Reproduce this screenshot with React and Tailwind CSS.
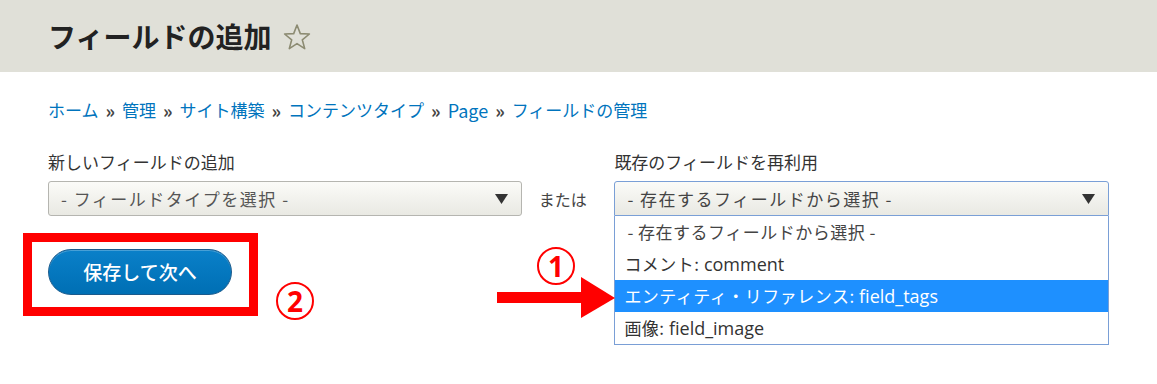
import { useState } from "react";

const jp = { fontFamily: '"Noto Sans CJK JP", "Noto Sans", sans-serif' };
const crumbs = ["ホーム", "管理", "サイト構築", "コンテンツタイプ", "Page", "フィールドの管理"];
const options = [
  { label: "- 存在するフィールドから選択 -" },
  { label: "コメント:", name: "comment" },
  { label: "エンティティ・リファレンス:", name: "field_tags" },
  { label: "画像:", name: "field_image" },
];

function Caret() {
  return (
    <svg width="13" height="10" viewBox="0 0 13 10" className="shrink-0">
      <polygon points="0,0 13,0 6.5,10" fill="#333" />
    </svg>
  );
}

function Circled({ n, className }) {
  return (
    <div
      className={`absolute w-[38px] h-[38px] rounded-full border-2 border-[#ff0000] flex items-center justify-center text-[#ff0000] text-[28px] font-bold leading-none ${className}`}
      style={{ fontFamily: '"Noto Sans", sans-serif' }}
    >
      {n}
    </div>
  );
}

export default function App() {
  const [picked] = useState(2);

  return (
    <div className="w-[1157px] h-[384px] bg-white overflow-hidden" style={jp}>
      <div className="h-[72px] bg-[#e0e0d8] flex items-center px-12 gap-3">
        <h1 className="text-[28px] font-bold text-[#222] leading-none">フィールドの追加</h1>
        <svg width="28" height="28" viewBox="0 0 28 28" className="mt-[2px]">
          <polygon
            points="14,2 17.3,10.6 26.4,11 19.3,16.8 21.7,25.6 14,20.6 6.3,25.6 8.7,16.8 1.6,11 10.7,10.6"
            fill="none"
            stroke="#8c8b72"
            strokeWidth="1.6"
            strokeLinejoin="round"
          />
        </svg>
      </div>

      <div className="relative px-12">
        <nav className="pt-[26px] text-[17px] leading-6 flex items-center gap-[7px]">
          {crumbs.map((c, i) => (
            <span key={c} className="flex items-center gap-[7px]">
              <a className={`text-[#0074bd] ${c === "Page" ? "text-[18px]" : ""}`}>{c}</a>
              {i < crumbs.length - 1 && <span className="text-[#444] text-[18px] font-bold">»</span>}
            </span>
          ))}
        </nav>

        <div className="mt-[28px] flex items-start">
          <div className="w-[476px]">
            <div className="text-[17px] leading-6 text-[#333]">新しいフィールドの追加</div>
            <div className="mt-[7px] h-[35px] rounded-[3px] border border-[#b5b5b0] bg-gradient-to-b from-[#fbfbf8] to-[#e9e9e3] flex items-center justify-between pl-[12px] pr-[13px] text-[17px] tracking-[1.5px] text-[#555]">
              <span>- フィールドタイプを選択 -</span>
              <Caret />
            </div>
          </div>

          <div className="ml-[17px] w-[76px] pt-[31px] h-[66px] flex items-center text-[16px] text-[#444]">または</div>

          <div className="w-[497px]">
            <div className="text-[17px] leading-6 text-[#333]">既存のフィールドを再利用</div>
            <div className="relative mt-[7px]">
              <div className="h-[35px] rounded-t-[3px] border border-[#7a9fd6] bg-gradient-to-b from-[#fbfbf8] to-[#e9e9e3] flex items-center justify-between pl-[12px] pr-[13px] text-[17px] tracking-[1.5px] text-[#444]">
                <span>- 存在するフィールドから選択 -</span>
                <Caret />
              </div>
              <ul className="absolute left-0 right-0 top-full border border-t-0 border-[#7a9fd6] bg-white text-[18px]">
                {options.map((o, i) => (
                  <li
                    key={o.label}
                    className={`h-[32px] flex items-center whitespace-pre ${i === picked ? "bg-[#1e90ff] text-white" : "text-[#333]"} ${i === 0 ? "pl-[12px] text-[#444]" : "pl-[9px]"}`}
                  >
                    <span className="text-[17px] tracking-[0.5px]">
                      {o.label}
                      {o.name && " "}
                    </span>
                    {o.name && <span style={{ fontFamily: '"Open Sans", sans-serif' }}>{o.name}</span>}
                  </li>
                ))}
              </ul>
            </div>
          </div>
        </div>

        <button className="mt-[33px] w-[184px] h-[46px] rounded-full border border-[#1a5a8c] bg-gradient-to-b from-[#0a80c9] to-[#006fb4] text-white text-[19px] font-medium shadow-[inset_0_1px_0_rgba(255,255,255,0.25)]">
          保存して次へ
        </button>

        <div className="absolute left-[23px] top-[161px] w-[235px] h-[83px] border-[9px] border-[#ff0000]" />
        <Circled n="2" className="left-[276px] top-[210px]" />
        <Circled n="1" className="left-[537px] top-[175px]" />
        <svg width="120" height="42" viewBox="0 0 120 42" className="absolute left-[497px] top-[205px]">
          <rect x="0" y="15" width="88" height="11" fill="#ff0000" />
          <polygon points="84,0 118,21 84,41" fill="#ff0000" />
        </svg>
      </div>
    </div>
  );
}
